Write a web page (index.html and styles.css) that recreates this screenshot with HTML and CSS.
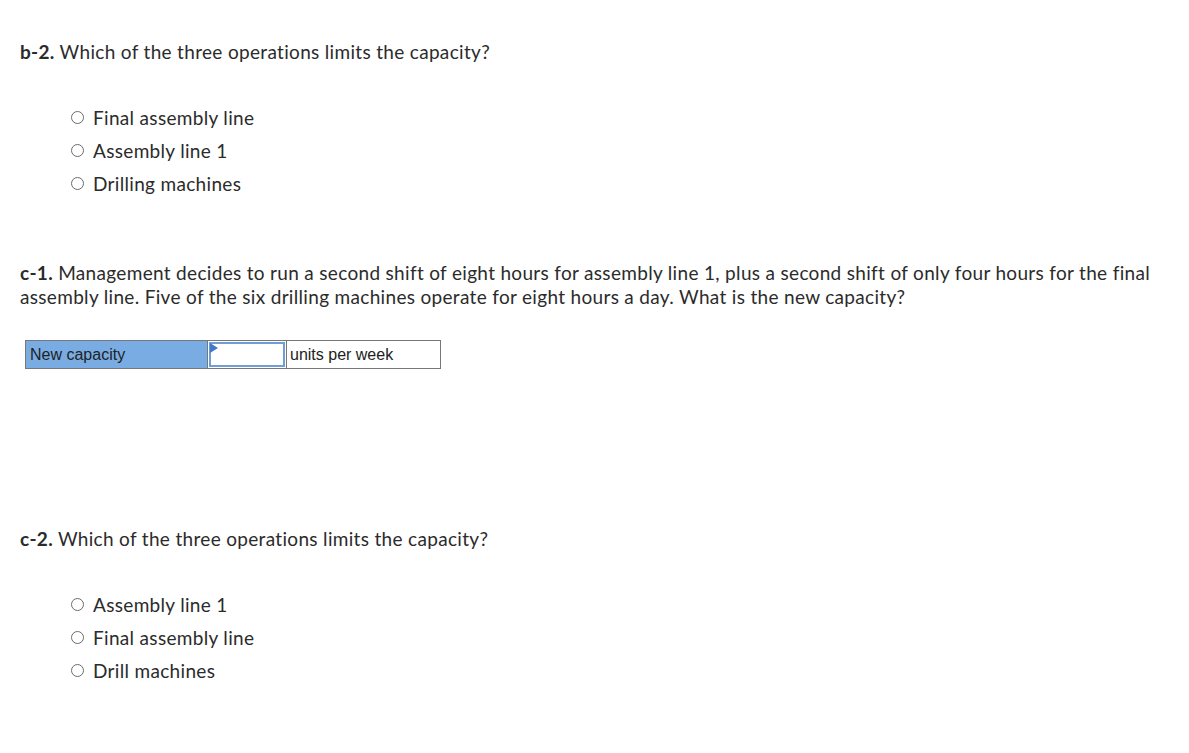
FILE: index.html
```html
<!DOCTYPE html>
<html>
<head>
<meta charset="utf-8">
<link rel="stylesheet" href="styles.css">
</head>
<body>
<div class="page">
  <section class="q q-b2">
    <p class="prompt"><strong>b-2.</strong> Which of the three operations limits the capacity?</p>
    <ul class="options">
      <li><span class="radio"></span>Final assembly line</li>
      <li><span class="radio"></span>Assembly line 1</li>
      <li><span class="radio"></span>Drilling machines</li>
    </ul>
  </section>

  <section class="q q-c1">
    <p class="prompt"><strong>c-1.</strong> Management decides to run a second shift of eight hours for assembly line 1, plus a second shift of only four hours for the final assembly line. Five of the six drilling machines operate for eight hours a day. What is the new capacity?</p>
    <table class="answer">
      <tr>
        <td class="label">New capacity</td>
        <td class="input"><span class="field"><span class="flag"></span></span></td>
        <td class="unit">units per week</td>
      </tr>
    </table>
  </section>

  <section class="q q-c2">
    <p class="prompt"><strong>c-2.</strong> Which of the three operations limits the capacity?</p>
    <ul class="options">
      <li><span class="radio"></span>Assembly line 1</li>
      <li><span class="radio"></span>Final assembly line</li>
      <li><span class="radio"></span>Drill machines</li>
    </ul>
  </section>
</div>
</body>
</html>
```

FILE: styles.css
```css
html, body {
  margin: 0;
  padding: 0;
  background: #fff;
}
body {
  font-family: Lato, "Open Sans", sans-serif;
  font-size: 19px;
  letter-spacing: 0.32px;
  color: #2b2b2b;
}
.page {
  padding: 40px 20px 0 20px;
  width: 1150px;
}
.prompt {
  margin: 0;
  line-height: 24px;
}
.prompt strong {
  font-weight: 700;
}
.options {
  list-style: none;
  margin: 0;
  padding: 0 0 0 51px;
}
.options li {
  display: flex;
  align-items: center;
  height: 33px;
}
.radio {
  width: 13px;
  height: 13px;
  border: 1px solid #6b6b6b;
  border-radius: 50%;
  box-sizing: border-box;
  margin-right: 9px;
  flex: none;
}
.q-b2 .options { margin-top: 37px; }
.q-c1 { margin-top: 61px; }
.answer {
  margin: 31px 0 0 5px;
  border-collapse: collapse;
  border: 1px solid #777;
  font-family: "Liberation Sans", Arial, sans-serif;
  font-size: 16px;
  letter-spacing: 0;
  color: #222;
}
.answer td {
  padding: 0;
  height: 27px;
  border: 1px solid #777;
}
.answer .label {
  width: 177px;
  background: #78ace3;
  padding-left: 4px;
}
.answer .input {
  width: 78px;
  background: #fff;
}
.field {
  display: block;
  position: relative;
  margin: 1px;
  border: 2px solid #6f9fd8;
  box-sizing: border-box;
  height: 25px;
}
.flag {
  position: absolute;
  left: -1px;
  top: -1px;
  width: 0;
  height: 0;
  border-top: 5px solid transparent;
  border-bottom: 5px solid transparent;
  border-left: 8px solid #3f79c8;
}
.answer .unit {
  width: 150px;
  padding-left: 3px;
}
.q-c2 { margin-top: 158px; }
.q-c2 .options { margin-top: 37px; }
```
